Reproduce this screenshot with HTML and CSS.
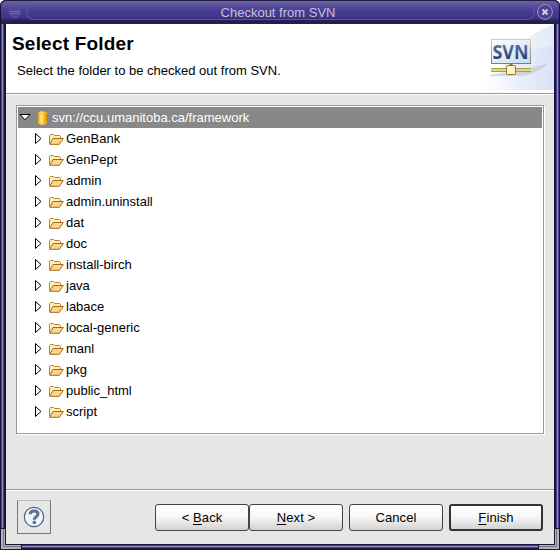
FILE: index.html
```html
<!DOCTYPE html>
<html lang="en">
<head>
  <meta charset="UTF-8">
  <title>Checkout from SVN</title>
  <link rel="stylesheet" href="styles.css">
</head>
<body>
  <div class="window">
    <div class="titlebar">
      <svg class="menu-icon" width="14" height="14" viewBox="0 0 14 14">
        <circle cx="7" cy="7" r="5.5" fill="#50479a" stroke="#5b529c"/>
        <path d="M2 6.5h10M2 8.5h10" stroke="#6f67ac"/>
      </svg>
      <div class="title"><span>Checkout from SVN</span></div>
      <svg class="close-icon" width="18" height="18" viewBox="0 0 18 18">
        <circle cx="9" cy="9" r="7.4" fill="#4b4190" stroke="#9b94c4"/>
        <path d="M6.5 6.5l5 5M11.5 6.5l-5 5" stroke="#d4d1e6" stroke-width="2"/>
      </svg>
    </div>

    <div class="content">
      <!-- Wizard banner -->
      <div class="banner">
        <div class="banner-text">
          <h1>Select Folder</h1>
          <p>Select the folder to be checked out from SVN.</p>
        </div>
        <svg class="banner-art" width="75" height="66" viewBox="0 0 75 66">
          <defs>
            <linearGradient id="sky" x1="0" x2="1" y1="0" y2="0">
              <stop offset="0" stop-color="#fff"/>
              <stop offset=".3" stop-color="#f7f9fd"/>
              <stop offset="1" stop-color="#e2e9f8"/>
            </linearGradient>
            <linearGradient id="haze" x1="0" x2="1" y1="0" y2="0">
              <stop offset=".2" stop-color="#d8e1f5" stop-opacity="0"/>
              <stop offset="1" stop-color="#d5dff5"/>
            </linearGradient>
            <linearGradient id="glass" x1="0" x2="1" y1="0" y2="1">
              <stop offset="0" stop-color="#fff"/>
              <stop offset="1" stop-color="#c9dcef"/>
            </linearGradient>
            <linearGradient id="edge" x1="0" x2="0" y1="0" y2="1">
              <stop offset="0" stop-color="#e9c793"/>
              <stop offset="1" stop-color="#5c8c8d"/>
            </linearGradient>
            <linearGradient id="ink" x1="0" x2="0" y1="0" y2="1">
              <stop offset="0.2" stop-color="#6277a3"/>
              <stop offset="0.8" stop-color="#253e72"/>
            </linearGradient>
          </defs>
          <path d="M75 0v66H0C5 58 14 50 23 40C37 22 53 8 75 0z" fill="url(#sky)"/>
          <path d="M75 22v44H0C20 40 45 25 75 22z" fill="url(#haze)" opacity=".6"/>
          <path d="M11 51l40-7 18-5c-4 6-15 11-25 13H11z" fill="#c9cbdc" opacity=".75"/>
          <rect x="12.5" y="15.5" width="39" height="24" fill="url(#glass)" stroke="url(#edge)"/>
          <text class="svn" x="13.5" y="35" textLength="36" lengthAdjust="spacingAndGlyphs" fill="url(#ink)">SVN</text>
          <path d="M12 46h40" stroke="#a59f3e" stroke-width="4"/>
          <path d="M12 46h40" stroke="#f3edac" stroke-width="1.5"/>
          <path d="M32 39v3" stroke="#8b8134" stroke-width="3"/>
          <rect x="27.5" y="41.5" width="9" height="9" rx="1" fill="#fff0c9" stroke="#8b7925"/>
        </svg>
      </div>

      <!-- Repository tree -->
      <div class="tree">
        <div class="row root">
          <svg class="arrow-down" width="12" height="7" viewBox="0 0 12 7"><path d="M1 .5h10L6 5.800z" fill="#fff" stroke="#000"/></svg>
          <svg class="repo" width="9" height="14" viewBox="0 0 9 14">
            <defs>
              <linearGradient id="gold" x1="0" x2="1" y1="0" y2="0">
                <stop offset="0" stop-color="#e39c00"/>
                <stop offset=".35" stop-color="#fff0a0"/>
                <stop offset=".65" stop-color="#fbc52b"/>
                <stop offset="1" stop-color="#d58b00"/>
              </linearGradient>
            </defs>
            <path d="M0 1.500Q4.500-1 9 1.500v11Q4.500 15 0 12.500z" fill="url(#gold)"/>
            <path d="M0 2q4.500 2 9 0M0 11.500q4.500 2 9 0" fill="none" stroke="#f6bc28"/>
          </svg>
          <span>svn://ccu.umanitoba.ca/framework</span>
        </div>
        <div class="children" id="folders"></div>
      </div>

      <!-- Wizard buttons -->
      <div class="footer">
        <div class="help">
          <svg width="22" height="22" viewBox="0 0 22 22">
            <circle cx="11" cy="11" r="9.700" fill="#f2f4f7" stroke="#4d6489" stroke-width="1.200"/>
            <path d="M7.100 8.300C7.100 5.900 8.800 5 11.100 5c2.400 0 3.900 1.200 3.900 3 0 2.800-3.800 2.700-3.800 5.700" fill="none" stroke="#5d7396" stroke-width="3"/>
            <rect x="9.600" y="14.800" width="3.400" height="3.200" rx="1" fill="#5d7396"/>
          </svg>
        </div>
        <div class="pair">
          <button>&lt; <u>B</u>ack</button>
          <button><u>N</u>ext &gt;</button>
        </div>
        <button>Cancel</button>
        <button class="default"><u>F</u>inish</button>
      </div>
    </div>
    <div class="grip left"></div>
    <div class="grip right"></div>
  </div>

  <script src="script.js"></script>
</body>
</html>
```
FILE: styles.css
```css
body {
  margin: 0;
  background: #fff;
  font-family: "Liberation Sans", Arial, sans-serif;
  font-size: 13px;
  color: #000;
}

.window {
  position: relative;
  box-sizing: border-box;
  width: 560px;
  height: 550px;
  padding: 0 6px 6px;
  border-radius: 6px 6px 0 0;
  background: #19133b;
  box-shadow: inset 1px 0 #19133b, inset -1px 0 #19133b, inset 0 -2px #19133b,
    inset 2px 0 #4b4188, inset -2px 0 #4b4188, inset 0 -3px #51478f,
    inset 3px 0 #9188bd, inset -3px 0 #9188bd, inset 0 -4px #9188bd,
    inset 4px 0 #4b4188, inset -4px 0 #4b4188, inset 0 -5px #4b4188;
}

.titlebar {
  display: flex;
  align-items: center;
  box-sizing: border-box;
  height: 24px;
  margin: 0 -5px;
  padding: 0 1px 0 7px;
  border-top: 1px solid #211b42;
  border-radius: 6px 6px 0 0;
  background: linear-gradient(#6b63a8 0, #5b5299 4px, #463c91 10px, #40378a 16px, #302868 19px, #241d4e 20px, #241d4e);
}

.title {
  flex: 1;
  box-sizing: border-box;
  height: 16px;
  margin: 0 1px 1px 4px;
  border: 1px solid #5e559f;
  border-top-color: transparent;
  border-radius: 8px;
  line-height: 15px;
  text-align: center;
  color: #c5c1dc;
}

.menu-icon {
  margin-bottom: 2px;
}

.title span {
  margin-left: -5px;
}

.close-icon {
  margin: 0 4px 1px 0;
}

.content {
  display: flex;
  flex-direction: column;
  height: 520px;
  background: #e6e6e6;
}

.banner {
  display: flex;
  justify-content: space-between;
  height: 69px;
  background: #fff;
  border-bottom: 1px solid #999;
  box-shadow: 0 1px #fff;
}

h1 {
  margin: 8px 0 0 6px;
  font-size: 19px;
  line-height: 23px;
  letter-spacing: 0.2px;
}

.banner p {
  margin: 8px 0 0 11px;
  line-height: 16px;
}

.svn {
  font: bold 20px "Open Sans", sans-serif;
}

.tree {
  box-sizing: border-box;
  height: 329px;
  margin: 11px 10px 0;
  padding: 1px;
  border: 1px solid #999;
  background: #fff;
  box-shadow: 1px 1px #fff;
}

.row {
  display: flex;
  align-items: center;
  height: 21px;
}

.root {
  background: #888;
  color: #fff;
}

.arrow-down {
  margin: 0 7px 0 1px;
}

.repo {
  margin-right: 5px;
}

.children {
  padding-left: 17px;
}

.arrow {
  margin-right: 7px;
}

.folder {
  margin-right: 2px;
}

.footer {
  display: flex;
  align-items: flex-start;
  gap: 6px;
  flex: 1;
  margin-top: 55px;
  padding: 14px 11px 0;
  border-top: 1px solid #999;
  box-shadow: inset 0 1px #fff;
}

.help {
  display: flex;
  align-items: center;
  justify-content: center;
  box-sizing: border-box;
  width: 34px;
  height: 34px;
  margin: -4px auto 0 0;
  border: 1px solid #777;
  border-top-color: #bbb;
}

.pair {
  display: flex;
}

button {
  box-sizing: border-box;
  width: 94px;
  height: 27px;
  padding: 0;
  border: 1px solid #444;
  border-radius: 3px;
  background: linear-gradient(#fff 0, #f8f8f8 45%, #d2d2d2);
  font: inherit;
  letter-spacing: 0.1px;
}

button u {
  text-underline-offset: 2px;
}

.default {
  border-width: 2px;
  border-color: #333;
}

/* Resize corners lie over the frame */
.grip {
  position: absolute;
  bottom: 1px;
  box-sizing: border-box;
  width: 20px;
  height: 20px;
  border: 0 solid #b4b4b8;
  border-bottom-width: 4px;
  box-shadow: 0 0 0 1px #19133b;
  clip-path: polygon(-1px -1px, 4px -1px, 4px 16px, 21px 16px, 21px 21px, -1px 21px);
}

.grip::after {
  content: "";
  position: absolute;
  inset: 0 0 -2px -2px;
  border: solid #77757f;
  border-width: 0 0 1px 1px;
}

.grip.left {
  left: 1px;
  border-left-width: 4px;
}

.grip.right {
  right: 1px;
  border-left-width: 4px;
  transform: scaleX(-1);
}
```
FILE: script.js
```js
const folders = [
  "GenBank", "GenPept", "admin", "admin.uninstall", "dat", "doc", "install-birch",
  "java", "labace", "local-generic", "manl", "pkg", "public_html", "script"
];

const icons = `
  <svg class="arrow" width="7" height="11" viewBox="0 0 7 11"><path d="M.5 .5v10L6 5.500z" fill="#fff" stroke="#000"/></svg>
  <svg class="folder" width="15" height="12" viewBox="0 0 15 12">
    <path d="M.5 10.500v-8l1-1h3l1 1h5l1 1v2" fill="#fff0b5" stroke="#bd7d2c"/>
    <path d="M.7 11.300L4 5.500h10.300l-4 5.800z" fill="#fbd68a" stroke="#a9671d"/>
  </svg>`;

document.getElementById("folders").innerHTML = folders
  .map(name => `<div class="row">${icons}<span>${name}</span></div>`)
  .join("");
```
